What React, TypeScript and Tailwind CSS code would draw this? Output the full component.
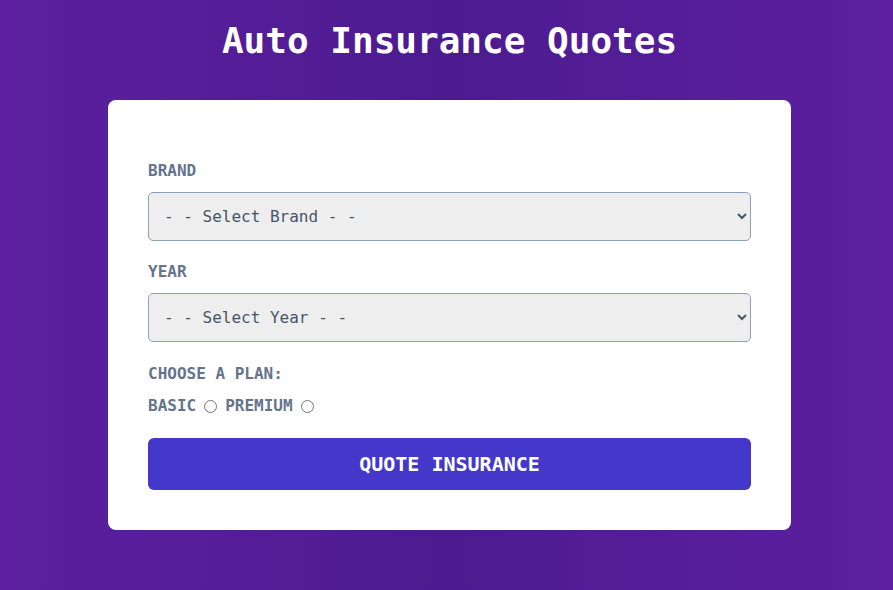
import React, { useState } from 'react';

const mono = { fontFamily: '"DejaVu Sans Mono", "Liberation Mono", monospace' };

export default function App() {
  const [plan, setPlan] = useState('');

  return (
    <div
      className="min-h-[590px] w-full bg-gradient-to-r from-[#5d1f9f] via-[#4c1b90] to-[#5d1f9f] pt-[21px] pb-[60px] pl-1.5"
      style={mono}
    >
      <h1 className="text-center text-4xl leading-10 font-bold text-white">Auto Insurance Quotes</h1>

      {/* Card */}
      <div className="mx-auto mt-[39px] w-[683px] rounded-lg bg-white px-10 pt-[59px] pb-10">
        <form onSubmit={(e) => e.preventDefault()}>
          <label className="block text-base leading-6 font-bold text-[#64748b] uppercase">Brand</label>
          <select
            className="mt-[9px] block h-[49px] w-full rounded-[5px] border border-[#8fa0bb] bg-[#eeeeee] pr-4 pl-[11px] text-base text-[#475569]"
            style={mono}
            defaultValue=""
          >
            <option value="">- - Select Brand - -</option>
            <option value="1">Americano</option>
            <option value="2">Europeo</option>
            <option value="3">Asiatico</option>
          </select>

          <label className="mt-[19px] block text-base leading-6 font-bold text-[#64748b] uppercase">Year</label>
          <select
            className="mt-[9px] block h-[49px] w-full rounded-[5px] border border-[#8fa0bb] bg-[#eeeeee] pr-4 pl-[11px] text-base text-[#475569]"
            style={mono}
            defaultValue=""
          >
            <option value="">- - Select Year - -</option>
            <option value="2024">2024</option>
            <option value="2023">2023</option>
          </select>

          <p className="mt-5 text-base leading-6 font-bold text-[#64748b] uppercase">Choose a plan:</p>
          <div className="mt-2 flex h-6 items-center gap-2 text-base font-bold text-[#64748b] uppercase">
            <label htmlFor="basic">Basic</label>
            <input
              id="basic"
              type="radio"
              name="plan"
              checked={plan === 'basic'}
              onChange={() => setPlan('basic')}
              className="h-[13px] w-[13px]"
            />
            <label htmlFor="premium">Premium</label>
            <input
              id="premium"
              type="radio"
              name="plan"
              checked={plan === 'premium'}
              onChange={() => setPlan('premium')}
              className="h-[13px] w-[13px]"
            />
          </div>

          <button
            type="submit"
            className="mt-5 block h-[52px] w-full rounded-md bg-[#4338ca] text-xl font-bold text-white uppercase"
            style={mono}
          >
            Quote Insurance
          </button>
        </form>
      </div>
    </div>
  );
}
